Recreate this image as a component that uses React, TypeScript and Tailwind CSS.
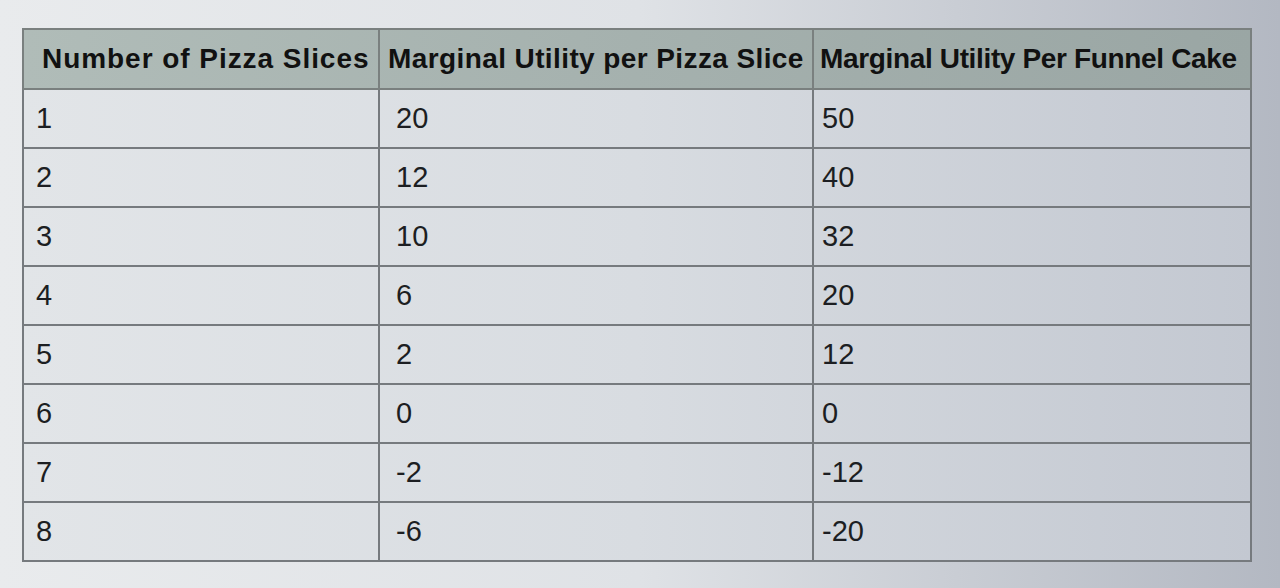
import React from "react";

const rows: [string, string, string][] = [
  ["1", "20", "50"],
  ["2", "12", "40"],
  ["3", "10", "32"],
  ["4", "6", "20"],
  ["5", "2", "12"],
  ["6", "0", "0"],
  ["7", "-2", "-12"],
  ["8", "-6", "-20"],
];

export default function App() {
  return (
    <div
      className="w-[1280px] h-[588px] overflow-hidden bg-linear-to-r from-[#e9ebed] via-[#dfe2e6] to-[#b3b8c2] pt-[28px] pl-[22px]"
      style={{ fontFamily: '"Liberation Sans", Arial, sans-serif' }}
    >
      <table className="w-[1228px] table-fixed border-collapse border-2 border-[#6e7276] text-[#1c1e22]">
        <colgroup>
          <col className="w-[356px]" />
          <col className="w-[434px]" />
          <col className="w-[438px]" />
        </colgroup>
        <thead>
          <tr className="h-[60px] bg-linear-to-r from-[#b0bcb8] to-[#9aa6a4]">
            <th className="whitespace-nowrap border-2 border-[#7a807f] pl-[18px] pr-0 text-left text-[28px] font-bold tracking-[0.95px] text-[#111]">
              Number of Pizza Slices
            </th>
            <th className="whitespace-nowrap border-2 border-[#7a807f] pl-[8px] pr-0 text-left text-[28px] font-bold tracking-[0.4px] text-[#111]">
              Marginal Utility per Pizza Slice
            </th>
            <th className="whitespace-nowrap border-2 border-[#7a807f] pl-[6px] pr-0 text-left text-[28px] font-bold tracking-[-0.35px] text-[#111]">
              Marginal Utility Per Funnel Cake
            </th>
          </tr>
        </thead>
        <tbody className="bg-linear-to-r from-[#e2e5e8] via-[#d8dce1] to-[#c3c8d1]">
          {rows.map((r, i) => (
            <tr key={i} className="h-[59px]">
              <td className="border-2 border-[#767a7e] px-[12px] text-[29px]">{r[0]}</td>
              <td className="border-2 border-[#767a7e] px-[16px] text-[29px]">{r[1]}</td>
              <td className="border-2 border-[#767a7e] px-[8px] text-[29px]">{r[2]}</td>
            </tr>
          ))}
        </tbody>
      </table>
    </div>
  );
}
